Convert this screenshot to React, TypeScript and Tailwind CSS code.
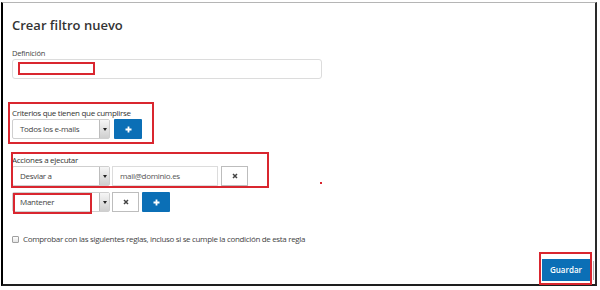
import React from 'react'

const font = { fontFamily: '"Open Sans", "Liberation Sans", sans-serif' }

function PlusIcon() {
  return (
    <svg width="7" height="7" viewBox="0 0 7 7">
      <path d="M3.5 0.5v6M0.5 3.5h6" stroke="white" strokeWidth="1.8" />
    </svg>
  )
}

function CrossIcon() {
  return (
    <svg width="6" height="6" viewBox="0 0 6 6">
      <path d="M1 1l4 4M5 1l-4 4" stroke="#444" strokeWidth="1.5" />
    </svg>
  )
}

function Select({ label }: { label: string }) {
  return (
    <div className="flex w-[98px] h-[20px] border border-[#cfcfcf] rounded-[2px] bg-white">
      <div className="flex-1 flex items-center pl-[7px] text-[8px] tracking-[-0.3px] text-[#444]">{label}</div>
      <div className="w-[10px] flex items-center justify-center border-l border-[#bdbdbd] bg-gradient-to-b from-[#f6f6f6] to-[#cfcfcf]">
        <div className="w-0 h-0 border-l-[2px] border-r-[2px] border-t-[3px] border-l-transparent border-r-transparent border-t-[#222]" />
      </div>
    </div>
  )
}

function PlusButton() {
  return (
    <div className="w-[28px] h-[20px] bg-[#0b6fb6] flex items-center justify-center rounded-[1px]">
      <PlusIcon />
    </div>
  )
}

function CrossButton() {
  return (
    <div className="w-[27px] h-[20px] border border-[#bdbdbd] bg-white flex items-center justify-center">
      <CrossIcon />
    </div>
  )
}

export default function App() {
  return (
    <div className="w-[600px] h-[290px] bg-white pt-[2px] pl-[1px]" style={font}>
      <div className="relative w-[596px] h-[284px] border-l-2 border-l-black border-t border-t-[#b5b5b5] border-r-2 border-r-[#2a2a2a] border-b-2 border-b-[#1e1e1e] flex flex-col pl-[9px]">
        <div className="mt-[12px] h-[20px] leading-[20px] text-[13px] font-semibold text-[#333]">Crear filtro nuevo</div>

        <div className="mt-[12px] h-[12px] leading-[12px] text-[7.5px] tracking-[-0.2px] text-[#444]">Definición</div>
        <div className="w-[310px] h-[20px] border border-[#dcdcdc] rounded-[3px] bg-white" />

        <div className="mt-[28px] h-[12px] leading-[12px] text-[8px] tracking-[-0.3px] text-[#333]">Criterios que tienen que cumplirse</div>
        <div className="flex gap-[4px]">
          <Select label="Todos los e-mails" />
          <PlusButton />
        </div>

        <div className="mt-[15px] h-[12px] leading-[12px] text-[8px] tracking-[-0.3px] text-[#333]">Acciones a ejecutar</div>
        <div className="flex gap-[2px]">
          <Select label="Desviar a" />
          <div className="w-[106px] h-[20px] border border-[#dcdcdc] flex items-center pl-[7px] text-[8px] tracking-[-0.3px] text-[#555]">mail@dominio.es</div>
          <div className="ml-[1px]">
            <CrossButton />
          </div>
        </div>

        <div className="mt-[6px] flex gap-[2px]">
          <Select label="Mantener" />
          <CrossButton />
          <div className="ml-[1px]">
            <PlusButton />
          </div>
        </div>

        <div className="mt-[21px] h-[12px] flex items-center gap-[4px]">
          <div className="w-[7px] h-[7px] border border-[#a0a0a0] rounded-[1px] bg-gradient-to-b from-white to-[#e4e4e4]" />
          <span className="text-[8px] tracking-[-0.33px] text-[#444] leading-[12px]">Comprobar con las siguientes reglas, incluso si se cumple la condición de esta regla</span>
        </div>

        <div className="mt-[14px] flex justify-end items-center pr-[1px]">
          <div className="w-[48px] h-[22px] bg-[#0b6fb6] text-white text-[8px] font-semibold flex items-center justify-center">Guardar</div>
          <div className="ml-[3px] w-[1px] h-[19px] bg-[#b0b0b0]" />
        </div>

        {/* annotations */}
        <div className="absolute left-[15px] top-[59px] w-[77px] h-[13px] border-2 border-[#d9262f]" />
        <div className="absolute left-[5px] top-[99px] w-[146px] h-[42px] border-2 border-[#d9262f]" />
        <div className="absolute left-[8px] top-[149px] w-[258px] h-[36px] border-2 border-[#d9262f]" />
        <div className="absolute left-[10px] top-[190px] w-[79px] h-[21px] border-2 border-[#d9262f]" />
        <div className="absolute left-[536px] top-[249px] w-[53px] h-[33px] border-2 border-[#d9262f]" />
        <div className="absolute left-[317px] top-[179px] w-[2px] h-[2px] bg-[#d9262f]" />
      </div>
    </div>
  )
}
